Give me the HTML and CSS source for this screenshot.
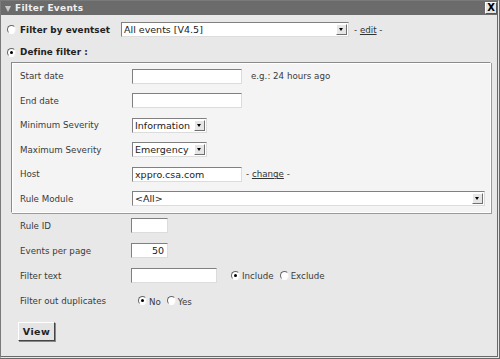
FILE: index.html
```html
<!DOCTYPE html>
<html>
<head>
<meta charset="utf-8">
<link rel="stylesheet" href="styles.css">
</head>
<body>
<div class="window">
  <div class="titlebar">
    <span class="tri"></span>
    <span class="title">Filter Events</span>
    <span class="close">X</span>
  </div>
  <div class="content">
    <div class="row top-row">
      <span class="radio"></span>
      <span class="strong lbl-es">Filter by eventset</span>
      <span class="select sel-es"><span class="val">All events [V4.5]</span><span class="arrow"></span></span>
      <span class="aside">- <a>edit</a> -</span>
    </div>
    <div class="row def-row">
      <span class="radio on"></span>
      <span class="strong">Define filter :</span>
    </div>
    <div class="fieldset">
      <div class="frow">
        <span class="label">Start date</span>
        <span class="input w110"></span>
        <span class="aside hint">e.g.: 24 hours ago</span>
      </div>
      <div class="frow">
        <span class="label">End date</span>
        <span class="input w110"></span>
      </div>
      <div class="frow">
        <span class="label">Minimum Severity</span>
        <span class="select sel-sev"><span class="val">Information</span><span class="arrow"></span></span>
      </div>
      <div class="frow">
        <span class="label">Maximum Severity</span>
        <span class="select sel-sev"><span class="val">Emergency</span><span class="arrow"></span></span>
      </div>
      <div class="frow">
        <span class="label">Host</span>
        <span class="input w110"><span class="val">xppro.csa.com</span></span>
        <span class="aside chg">- <a>change</a> -</span>
      </div>
      <div class="frow">
        <span class="label">Rule Module</span>
        <span class="select sel-mod"><span class="val">&lt;All&gt;</span><span class="arrow"></span></span>
      </div>
    </div>
    <div class="orow">
      <span class="label">Rule ID</span>
      <span class="input w37"></span>
    </div>
    <div class="orow">
      <span class="label">Events per page</span>
      <span class="input w37 right"><span class="val">50</span></span>
    </div>
    <div class="orow">
      <span class="label">Filter text</span>
      <span class="input w86"></span>
      <span class="radio on r-inc"></span><span class="opt">Include</span>
      <span class="radio r-exc"></span><span class="opt">Exclude</span>
    </div>
    <div class="orow">
      <span class="label">Filter out duplicates</span>
      <span class="radio on r-no"></span><span class="opt low">No</span>
      <span class="radio r-yes"></span><span class="opt low">Yes</span>
    </div>
    <div class="btnrow">
      <span class="button">View</span>
    </div>
  </div>
</div>
</body>
</html>
```

FILE: styles.css
```css
html, body {
  margin: 0;
  padding: 0;
  background: #ffffff;
}
body {
  font-family: "DejaVu Sans", Verdana, sans-serif;
  font-size: 8.7px;
  color: #3a3a3a;
}
.window {
  box-sizing: border-box;
  width: 500px;
  height: 359px;
  border: 1px solid #7a7a7a;
  border-right: 3px double #6a6a6a;
  border-bottom: 3px double #6a6a6a;
  background: #e8e8e8;
  display: flex;
  flex-direction: column;
}
.titlebar {
  height: 14px;
  background: #6b6b6b;
  display: flex;
  align-items: center;
  color: #f0f0f0;
  font-weight: bold;
  font-size: 9px;
  position: relative;
}
.tri {
  width: 0;
  height: 0;
  margin-left: 4px;
  margin-right: 4px;
  margin-top: 1px;
  border-left: 3.5px solid transparent;
  border-right: 3.5px solid transparent;
  border-top: 6px solid #c8c8c8;
}
.title {
  letter-spacing: 0.3px;
}
.close {
  position: absolute;
  right: 0px;
  top: 1px;
  width: 12px;
  height: 12px;
  box-sizing: border-box;
  background: #e4e4e4;
  border: 1px solid;
  border-color: #ffffff #555 #555 #ffffff;
  color: #000;
  font-size: 10px;
  line-height: 10px;
  text-align: center;
  font-weight: bold;
  letter-spacing: 0;
}
.content {
  padding-top: 2px;
}
.row {
  display: flex;
  align-items: center;
  padding-left: 6px;
}
.top-row {
  height: 25px;
}
.def-row {
  height: 20px;
}
.strong {
  font-weight: bold;
  font-size: 8.8px;
  letter-spacing: 0.1px;
  color: #222;
  margin-left: 4px;
  white-space: nowrap;
}
.lbl-es {
  width: 101px;
  flex: none;
}
.radio {
  box-sizing: border-box;
  display: inline-block;
  width: 9px;
  height: 9px;
  border-radius: 50%;
  border: 1px solid;
  border-color: #666 #f0f0f0 #fff #666;
  background: #fff;
  position: relative;
  flex: none;
}
.radio.on::after {
  content: "";
  position: absolute;
  left: 2px;
  top: 2px;
  width: 3px;
  height: 3px;
  background: #000;
  border-radius: 50%;
}
.select, .input {
  box-sizing: border-box;
  display: inline-flex;
  align-items: center;
  background: #fff;
  border: 1px solid;
  border-color: #808080 #dcdcdc #dcdcdc #808080;
  height: 15px;
  position: relative;
  flex: none;
  color: #222;
  font-size: 9.5px;
}
.val {
  padding-left: 2px;
  white-space: nowrap;
  flex: 1;
}
.arrow {
  box-sizing: border-box;
  width: 11px;
  height: 11px;
  margin-right: 1px;
  background: #e6e6e6;
  border: 1px solid;
  border-color: #fff #707070 #707070 #fff;
  position: relative;
  flex: none;
}
.arrow::after {
  content: "";
  position: absolute;
  left: 2px;
  top: 3px;
  border-left: 2.5px solid transparent;
  border-right: 2.5px solid transparent;
  border-top: 3px solid #000;
}
.sel-es {
  width: 228px;
}
.aside {
  margin-left: 5px;
  white-space: nowrap;
}
.aside a {
  text-decoration: underline;
  color: #333;
}
.hint {
  margin-left: 9px;
}
.chg {
  margin-left: 4px;
}
.fieldset {
  box-sizing: border-box;
  margin-left: 10px;
  width: 480px;
  background: #f4f4f4;
  border: 1px solid;
  border-color: #8a8a8a #ffffff #ffffff #8a8a8a;
  box-shadow: 1px 1px 0 #9a9a9a, inset 1px 1px 0 #ffffff;
  padding: 1px 0 1px 8px;
}
.frow {
  display: flex;
  align-items: center;
  height: 24.5px;
}
.label {
  width: 112px;
  flex: none;
  white-space: nowrap;
}
.w110 {
  width: 110px;
}
.w37 {
  width: 37px;
}
.w86 {
  width: 86px;
}
.sel-sev {
  width: 75px;
}
.sel-mod {
  width: 353px;
}
.right .val {
  text-align: right;
  padding-right: 3px;
}
.orow {
  display: flex;
  align-items: center;
  height: 25px;
  padding-left: 19px;
}
.orow .label {
  width: 111px;
}
.opt {
  margin-left: 2px;
}
.low {
  position: relative;
  top: 1px;
}
.r-inc {
  margin-left: 14px;
}
.r-exc {
  margin-left: 6px;
}
.r-no {
  margin-left: 7px;
}
.r-yes {
  margin-left: 6px;
}
.btnrow {
  padding: 9px 0 0 17px;
}
.button {
  box-sizing: border-box;
  display: inline-flex;
  align-items: center;
  justify-content: center;
  width: 37px;
  height: 19px;
  background: #e4e4e4;
  border: 1px solid;
  border-color: #ffffff #444 #444 #ffffff;
  box-shadow: 1px 1px 0 #888;
  font-weight: bold;
  font-size: 9.5px;
  letter-spacing: 0.4px;
  color: #222;
}
```
